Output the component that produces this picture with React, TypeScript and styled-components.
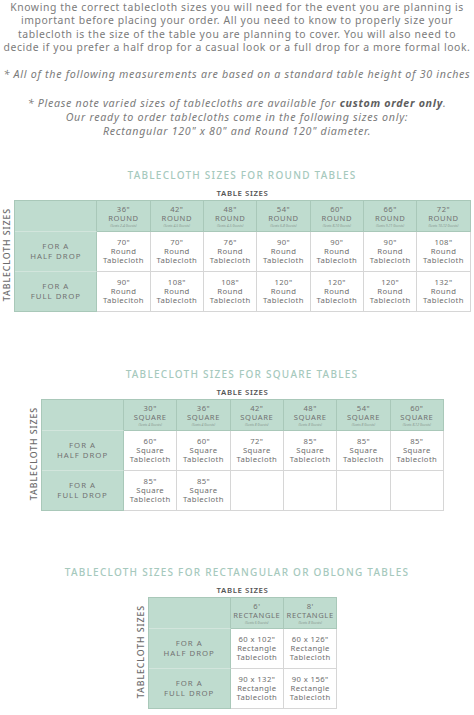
import React from "react";
import styled, { createGlobalStyle } from "styled-components";

const Global = createGlobalStyle`
  html, body { margin: 0; padding: 0; background: #ffffff; }
  body { font-family: "Noto Sans", "DejaVu Sans", sans-serif; -webkit-font-smoothing: antialiased; }
  * { box-sizing: border-box; }
`;

const GREEN = "#bfdccf";
const GREEN_LINE = "#a9c8b9";
const GRID_LINE = "#d6d6d6";

const Page = styled.div`
  width: 474px;
  display: flex;
  flex-direction: column;
  align-items: center;
  color: #7b7b7b;
`;

const Intro = styled.p`
  margin: 0.5px 0 0;
  font-size: 10.4px;
  line-height: 13.5px;
  letter-spacing: 0.6px;
  text-align: center;
  white-space: nowrap;
`;

const Note = styled.p<{ $mt: number }>`
  margin: ${(p) => p.$mt}px 0 0;
  font-size: 10.7px;
  line-height: 14px;
  letter-spacing: 0.7px;
  font-style: italic;
  text-align: center;
  white-space: nowrap;
  b { font-weight: 700; color: #5e5e5e; }
`;

const Section = styled.section<{ $mt: number }>`
  margin-top: ${(p) => p.$mt}px;
  display: flex;
  flex-direction: column;
  align-items: center;
`;

const Title = styled.h2<{ $shift: number }>`
  margin: 0 0 0 ${(p) => p.$shift}px;
  font-size: 10px;
  line-height: 12px;
  font-weight: 500;
  letter-spacing: 1.25px;
  color: #a6c9bd;
  text-transform: uppercase;
  white-space: nowrap;
`;

const Group = styled.div`
  display: flex;
  align-items: center;
  gap: 3px;
`;

const SideLabel = styled.div`
  writing-mode: vertical-rl;
  transform: rotate(180deg);
  font-size: 8.8px;
  line-height: 8px;
  letter-spacing: 0.9px;
  font-weight: 500;
  color: #6c6c6c;
  white-space: nowrap;
  margin-top: 10px;
  margin-bottom: -6px;
`;

const TableColumn = styled.div`
  display: flex;
  flex-direction: column;
  align-items: center;
`;

const TableSizes = styled.div`
  margin: 7.5px 0 2px;
  font-size: 7.8px;
  line-height: 10px;
  font-weight: 600;
  letter-spacing: 0.6px;
  color: #555555;
  white-space: nowrap;
`;

const Grid = styled.div<{ $cols: number }>`
  display: grid;
  grid-template-columns: 82px repeat(${(p) => p.$cols}, 53.33px);
  grid-template-rows: 31px 40px 40px;
  border-top: 1px solid ${GREEN_LINE};
  border-left: 1px solid ${GREEN_LINE};
`;

const Corner = styled.div`
  background: ${GREEN};
  border-right: 1px solid ${GREEN_LINE};
  border-bottom: 1px solid #d2e5dc;
`;

const HeadCell = styled.div`
  background: ${GREEN};
  border-right: 1px solid ${GREEN_LINE};
  border-bottom: 1px solid ${GREEN_LINE};
  display: flex;
  flex-direction: column;
  align-items: center;
  justify-content: center;
  color: #727272;
  padding-top: 1px;
`;

const HeadSize = styled.span`
  font-size: 7.6px;
  line-height: 9px;
  letter-spacing: 0.5px;
`;

const HeadShape = styled.span`
  font-size: 7.6px;
  line-height: 9px;
  letter-spacing: 0.6px;
  text-transform: uppercase;
  white-space: nowrap;
`;

const HeadSeats = styled.span`
  font-size: 3.4px;
  line-height: 5px;
  font-style: italic;
  color: #8a9a92;
  white-space: nowrap;
`;

const RowHead = styled.div<{ $last?: boolean }>`
  background: ${GREEN};
  border-right: 1px solid ${GREEN_LINE};
  border-bottom: 1px solid ${(p) => (p.$last ? GREEN_LINE : "#d2e5dc")};
  display: flex;
  flex-direction: column;
  align-items: center;
  justify-content: center;
  font-size: 7.8px;
  line-height: 9.6px;
  letter-spacing: 1px;
  color: #727272;
  text-transform: uppercase;
  white-space: nowrap;
`;

const Cell = styled.div`
  background: #ffffff;
  border-right: 1px solid ${GRID_LINE};
  border-bottom: 1px solid ${GRID_LINE};
  display: flex;
  flex-direction: column;
  align-items: center;
  justify-content: center;
  font-size: 7.7px;
  line-height: 9.1px;
  letter-spacing: 0.4px;
  color: #6e6e6e;
  white-space: nowrap;
  text-align: center;
`;

type Col = { size: string; shape: string; seats: string };
type Data = {
  title: string;
  shift: number;
  mt: number;
  cols: Col[];
  half: string[];
  full: (string | null)[];
  noun: string;
};

const tables: Data[] = [
  {
    title: "Tablecloth sizes for round tables",
    shift: 10,
    mt: 31,
    noun: "Round",
    cols: [
      { size: '36"', shape: "Round", seats: "(Seats 2-4 Guests)" },
      { size: '42"', shape: "Round", seats: "(Seats 4-5 Guests)" },
      { size: '48"', shape: "Round", seats: "(Seats 4-5 Guests)" },
      { size: '54"', shape: "Round", seats: "(Seats 6-8 Guests)" },
      { size: '60"', shape: "Round", seats: "(Seats 8-10 Guests)" },
      { size: '66"', shape: "Round", seats: "(Seats 9-11 Guests)" },
      { size: '72"', shape: "Round", seats: "(Seats 10-12 Guests)" },
    ],
    half: ['70"', '70"', '76"', '90"', '90"', '90"', '108"'],
    full: ['90"', '108"', '108"', '120"', '120"', '120"', '132"'],
  },
  {
    title: "Tablecloth sizes for square tables",
    shift: 10,
    mt: 55.5,
    noun: "Square",
    cols: [
      { size: '30"', shape: "Square", seats: "(Seats 4 Guests)" },
      { size: '36"', shape: "Square", seats: "(Seats 4 Guests)" },
      { size: '42"', shape: "Square", seats: "(Seats 8 Guests)" },
      { size: '48"', shape: "Square", seats: "(Seats 8 Guests)" },
      { size: '54"', shape: "Square", seats: "(Seats 8 Guests)" },
      { size: '60"', shape: "Square", seats: "(Seats 8-12 Guests)" },
    ],
    half: ['60"', '60"', '72"', '85"', '85"', '85"'],
    full: ['85"', '85"', null, null, null, null],
  },
  {
    title: "Tablecloth sizes for rectangular or oblong tables",
    shift: 0,
    mt: 54.5,
    noun: "Rectangle",
    cols: [
      { size: "6'", shape: "Rectangle", seats: "(Seats 6 Guests)" },
      { size: "8'", shape: "Rectangle", seats: "(Seats 8 Guests)" },
    ],
    half: ['60 x 102"', '60 x 126"'],
    full: ['90 x 132"', '90 x 156"'],
  },
];

function SizeTable({ d }: { d: Data }) {
  return (
    <Section $mt={d.mt}>
      <Title $shift={d.shift}>{d.title}</Title>
      <Group>
        <SideLabel>TABLECLOTH SIZES</SideLabel>
        <TableColumn>
          <TableSizes>TABLE SIZES</TableSizes>
          <Grid $cols={d.cols.length}>
            <Corner />
            {d.cols.map((c, i) => (
              <HeadCell key={"h" + i}>
                <HeadSize>{c.size}</HeadSize>
                <HeadShape>{c.shape}</HeadShape>
                <HeadSeats>{c.seats}</HeadSeats>
              </HeadCell>
            ))}
            <RowHead>
              <span>For a</span>
              <span>Half drop</span>
            </RowHead>
            {d.half.map((v, i) => (
              <Cell key={"a" + i}>
                <span>{v}</span>
                <span>{d.noun}</span>
                <span>Tablecloth</span>
              </Cell>
            ))}
            <RowHead $last>
              <span>For a</span>
              <span>Full drop</span>
            </RowHead>
            {d.full.map((v, i) => (
              <Cell key={"b" + i}>
                {v && (
                  <>
                    <span>{v}</span>
                    <span>{d.noun}</span>
                    <span>{d.noun === "Round" && i === 0 ? "Tablecitoh" : "Tablecloth"}</span>
                  </>
                )}
              </Cell>
            ))}
          </Grid>
        </TableColumn>
      </Group>
    </Section>
  );
}

export default function App() {
  return (
    <Page>
      <Global />
      <Intro>
        Knowing the correct tablecloth sizes you will need for the event you are planning is
        <br />
        important before placing your order. All you need to know to properly size your
        <br />
        tablecloth is the size of the table you are planning to cover. You will also need to
        <br />
        decide if you prefer a half drop for a casual look or a full drop for a more formal look.
      </Intro>
      <Note $mt={12.5}>* All of the following measurements are based on a standard table height of 30 inches</Note>
      <Note $mt={14.5}>
        * Please note varied sizes of tablecloths are available for <b>custom order only</b>.
        <br />
        Our ready to order tablecloths come in the following sizes only:
        <br />
        Rectangular 120" x 80" and Round 120" diameter.
      </Note>
      {tables.map((d) => (
        <SizeTable key={d.title} d={d} />
      ))}
    </Page>
  );
}
